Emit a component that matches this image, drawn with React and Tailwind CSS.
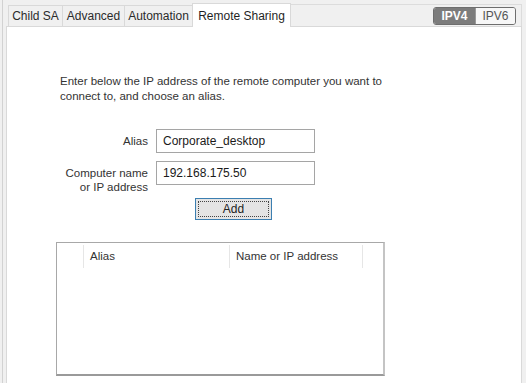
import React from 'react';

const tabs = [
    { label: 'Child SA', w: 'w-[54px]' },
    { label: 'Advanced', w: 'w-[62px]' },
    { label: 'Automation', w: 'w-[68px]' },
];

function Field({ label, value }) {
    return (
        <div className="flex items-start">
            <div className="w-[149px] pr-[8px] text-right text-[11.5px] leading-[14px] text-[#333] pt-[5px]">
                {label}
            </div>
            <div className="w-[159px] h-[24px] border border-[#a5a5a5] bg-white px-[6px] flex items-center text-[12px] text-[#1a1a1a]">
                {value}
            </div>
        </div>
    );
}

export default function App() {
    return (
        <div className="w-[526px] h-[383px] bg-[#f0f0f0] pl-[2px] pr-[4px] overflow-hidden font-['Liberation_Sans',Arial,sans-serif]">
            <div className="h-full flex flex-col border-l border-[#d2d2d2] pl-[3px]">
                {/* Tab strip */}
                <div className="h-[26px] flex items-end pl-[2px]">
                    {tabs.map(t => (
                        <div
                            key={t.label}
                            className={`${t.w} h-[21px] border border-b-0 border-r-0 border-[#d9d9d9] bg-[#f0f0f0] flex items-center justify-center text-[12px] text-[#2b2b2b]`}
                        >
                            {t.label}
                        </div>
                    ))}
                    <div className="w-[99px] h-[24px] -mb-px relative z-10 border border-b-0 border-[#d9d9d9] bg-white flex items-start justify-center pt-[3px] text-[12px] text-[#1f1f1f]">
                        Remote Sharing
                    </div>
                    <div className="flex-1 self-stretch mt-[4px] border-t border-r border-[#dcdcdc] flex justify-end items-start pt-[2px] pr-[5px]">
                        <div className="flex h-[18px] rounded-[3px] border border-[#6e6e6e] overflow-hidden text-[12px] leading-none">
                            <div className="w-[41px] bg-[#7c7c7c] text-white font-bold flex items-center justify-center">IPV4</div>
                            <div className="w-[40px] bg-[#f7f7f7] text-[#555] flex items-center justify-center border-l border-[#9a9a9a]">IPV6</div>
                        </div>
                    </div>
                </div>

                {/* Panel */}
                <div className="flex-1 bg-white border border-b-0 border-[#d9d9d9] flex flex-col">
                    <p className="ml-[53px] mt-[47px] w-[340px] text-[11.5px] leading-[15px] text-[#333]">
                        Enter below the IP address of the remote computer you want to connect to, and choose an alias.
                    </p>

                    <div className="mt-[25px] flex flex-col gap-[8px]">
                        <Field label="Alias" value="Corporate_desktop" />
                        <Field label={<>Computer name<br />or IP address</>} value="192.168.175.50" />
                    </div>

                    <div className="ml-[188px] mt-[4px] w-[77px] h-[22px] border border-[#3c7fb1] bg-[#e4e4e4] p-[2px]">
                        <div className="h-full border border-dotted border-[#444] flex items-center justify-center text-[12px] text-[#222]">
                            Add
                        </div>
                    </div>

                    {/* List */}
                    <div className="ml-[49px] mt-[22px] w-[329px] h-[134px] border border-[#a8a8a8] border-b-2 border-r-2 border-b-[#9a9a9a] border-r-[#c4c4c4] bg-white">
                        <div className="h-[27px] flex items-stretch pt-[2px] pb-[2px] text-[11.5px] text-[#333]">
                            <div className="w-[27px] border-r border-[#e6e6e6]" />
                            <div className="w-[146px] border-r border-[#e6e6e6] pl-[6px] flex items-center">Alias</div>
                            <div className="w-[133px] border-r border-[#e6e6e6] pl-[6px] flex items-center">Name or IP address</div>
                            <div className="flex-1" />
                        </div>
                    </div>
                </div>
            </div>
        </div>
    );
}
